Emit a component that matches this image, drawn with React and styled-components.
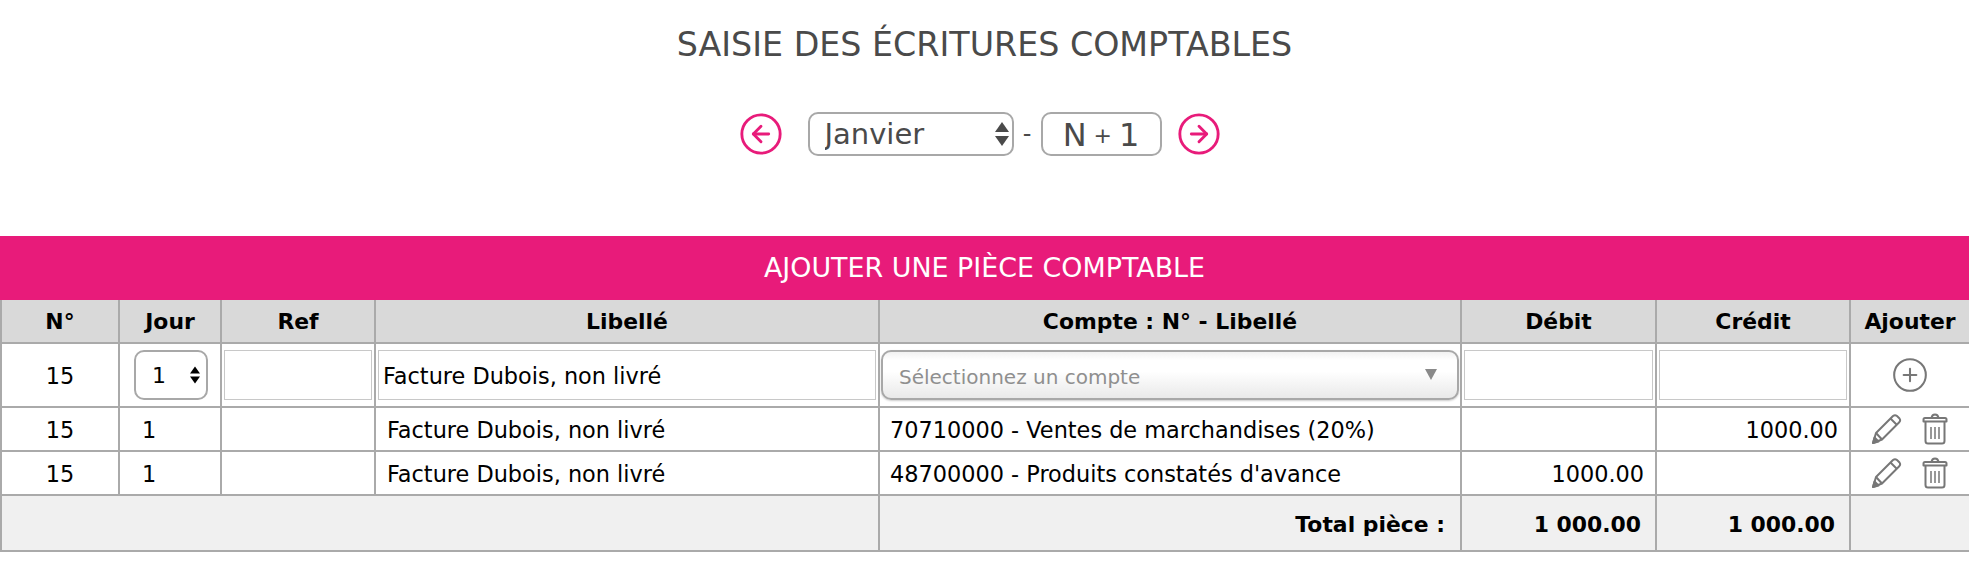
import React from 'react';
import styled, { createGlobalStyle } from 'styled-components';
import { CircleArrowLeft, CircleArrowRight, CirclePlus } from 'lucide-react';

const GlobalStyle = createGlobalStyle`
    html, body {
        margin: 0;
        padding: 0;
        background: #ffffff;
    }
    body {
        font-family: 'DejaVu Sans', Verdana, sans-serif;
        color: #000000;
    }
`;

const Page = styled.div`
    width: 1969px;
    min-height: 574px;
    overflow: hidden;
`;

const Title = styled.h1`
    margin: 0;
    padding-top: 25px;
    height: 89px;
    box-sizing: border-box;
    text-align: center;
    font-size: 33.3px;
    line-height: 40px;
    font-weight: 400;
    color: #4a4a4a;
`;

const PeriodBar = styled.div`
    height: 44px;
    margin-top: 23px;
    padding-right: 10px;
    display: flex;
    align-items: center;
    justify-content: center;
`;

const ArrowButton = styled.button`
    width: 40px;
    height: 40px;
    padding: 0;
    border: none;
    background: none;
    color: #e81b7a;
    display: flex;
    align-items: center;
    justify-content: center;
    margin: ${(p) => (p.$side === 'left' ? '0 27px 0 0' : '0 0 0 17px')};

    svg {
        flex-shrink: 0;
    }
`;

const SelectWrap = styled.div`
    position: relative;
    display: inline-block;
    width: ${(p) => p.$width}px;
    height: ${(p) => p.$height}px;
`;

const NativeSelect = styled.select`
    appearance: none;
    width: 100%;
    height: 100%;
    box-sizing: border-box;
    border: 2px solid #a8a8a8;
    border-radius: ${(p) => p.$radius}px;
    background: #ffffff;
    font-family: inherit;
    font-size: ${(p) => p.$size}px;
    color: ${(p) => p.$color};
    padding: 0 0 0 ${(p) => p.$pad}px;
    outline: none;
`;

const UpDown = styled.svg`
    position: absolute;
    top: 50%;
    right: ${(p) => p.$right}px;
    transform: translateY(-50%);
    pointer-events: none;
`;

const Dash = styled.span`
    width: 27px;
    text-align: center;
    font-size: 24px;
    color: #4a4a4a;
`;

const YearBox = styled.div`
    width: 121px;
    height: 44px;
    box-sizing: border-box;
    border: 2px solid #a8a8a8;
    border-radius: 10px;
    padding-top: 2px;
    display: flex;
    align-items: center;
    justify-content: center;
    gap: 7px;
    font-size: 32px;
    color: #4a4a4a;
`;

const Plus = styled.span`
    font-size: 22px;
`;

const Banner = styled.h2`
    margin: 80px 0 0;
    height: 64px;
    background: #e81b7a;
    color: #ffffff;
    font-size: 26.9px;
    font-weight: 400;
    line-height: 64px;
    text-align: center;
`;

const Sheet = styled.table`
    width: 1969px;
    table-layout: fixed;
    border-collapse: collapse;
    font-size: 22.4px;
`;

const HeadCell = styled.th`
    height: 42px;
    padding: 0;
    background: #d9d9d9;
    border: 2px solid #aaaaaa;
    border-top: none;
    font-size: 21.9px;
    font-weight: 700;
    text-align: center;
`;

const Cell = styled.td`
    height: ${(p) => p.$height || 44}px;
    padding: ${(p) => p.$pad || '0'};
    box-sizing: border-box;
    border: 2px solid #aaaaaa;
    text-align: ${(p) => p.$align || 'left'};
    vertical-align: middle;
    white-space: nowrap;
`;

const TotalCell = styled(Cell)`
    background: #f0f0f0;
    font-weight: 700;
    font-size: 21.9px;
`;

const TextInput = styled.input`
    display: block;
    width: 100%;
    height: 50px;
    box-sizing: border-box;
    border: 1px solid #c8c8c8;
    background: #ffffff;
    padding: 2px 4px 0;
    font-family: inherit;
    font-size: 22.4px;
    color: #000000;
    outline: none;
`;

const AccountPicker = styled.div`
    position: relative;
    height: 50px;
    box-sizing: border-box;
    border: 2px solid #a8a8a8;
    border-radius: 10px;
    background: linear-gradient(#f2f2f2, #ffffff 18%, #ffffff 42%, #e9e9e9);
    box-shadow: 0 1px 2px rgba(0, 0, 0, 0.2);
    display: flex;
    align-items: center;
    padding: 3px 0 0 16px;
    font-size: 20px;
    color: #8f8f8f;
`;

const PickerArrow = styled.span`
    position: absolute;
    right: 20px;
    top: 17px;
    width: 0;
    height: 0;
    border-left: 6px solid transparent;
    border-right: 6px solid transparent;
    border-top: 11px solid #8a8a8a;
`;

const ActionRow = styled.div`
    display: flex;
    align-items: center;
    padding-left: 19px;
    gap: 20px;
    color: #777777;
`;

const IconCenter = styled.div`
    display: flex;
    justify-content: center;
    color: #777777;
`;

const PencilIcon = () => (
    <svg width="32" height="32" viewBox="0 0 32 32" fill="none" stroke="currentColor" strokeWidth="2" strokeLinejoin="round">
        <path d="M3 30 L6 20 L23 3 Q25 1.5 27 3 L29.5 5.5 Q31 7.5 29 9.5 L12 26.5 Z" />
        <path d="M6 20 L12 26.5" />
        <path d="M20.5 5.5 L27 12" />
        <path d="M3 30 L4.5 24.5 L8.5 28.5 Z" fill="currentColor" />
    </svg>
);

const TrashIcon = () => (
    <svg width="26" height="32" viewBox="0 0 26 32" fill="none" stroke="currentColor" strokeWidth="2" strokeLinejoin="round">
        <path d="M1.5 6.5 Q1.5 5 3 5 H23 Q24.5 5 24.5 6.5 V8.5 H1.5 Z" />
        <path d="M9.5 5 Q10 1.5 13 1.5 Q16 1.5 16.5 5" />
        <path d="M3.5 8.5 V28 Q3.5 30.5 6 30.5 H20 Q22.5 30.5 22.5 28 V8.5" />
        <path d="M9 14 V26 M13 14 V26 M17 14 V26" strokeWidth="1.5" />
    </svg>
);

const UpDownArrows = ({ right, width, height, color }) => (
    <UpDown $right={right} width={width} height={height} viewBox="0 0 14 24" fill={color}>
        <path d="M7 0 L14 10 H0 Z" />
        <path d="M7 24 L0 14 H14 Z" />
    </UpDown>
);

const COLUMNS = [118, 102, 154, 504, 582, 195, 194, 120];

const rows = [
    { account: '70710000 - Ventes de marchandises (20%)', debit: '', credit: '1000.00' },
    { account: '48700000 - Produits constatés d\'avance', debit: '1000.00', credit: '' },
];

export default function App() {
    return (
        <Page>
            <GlobalStyle />
            <Title>SAISIE DES ÉCRITURES COMPTABLES</Title>
            <PeriodBar>
                <ArrowButton $side="left"><CircleArrowLeft size={46} strokeWidth={1.5} /></ArrowButton>
                <SelectWrap $width={206} $height={44}>
                    <NativeSelect $radius={10} $size={29} $pad={15} $color="#4a4a4a" defaultValue="Janvier">
                        <option>Janvier</option>
                    </NativeSelect>
                    <UpDownArrows right={5} width={14} height={24} color="#4a4a4a" />
                </SelectWrap>
                <Dash>-</Dash>
                <YearBox>N<Plus>+</Plus>1</YearBox>
                <ArrowButton $side="right"><CircleArrowRight size={46} strokeWidth={1.5} /></ArrowButton>
            </PeriodBar>
            <Banner>AJOUTER UNE PIÈCE COMPTABLE</Banner>
            <Sheet>
                <colgroup>
                    {COLUMNS.map((w, i) => <col key={i} style={{ width: w }} />)}
                </colgroup>
                <thead>
                    <tr>
                        <HeadCell>N°</HeadCell>
                        <HeadCell>Jour</HeadCell>
                        <HeadCell>Ref</HeadCell>
                        <HeadCell>Libellé</HeadCell>
                        <HeadCell>Compte : N° - Libellé</HeadCell>
                        <HeadCell>Débit</HeadCell>
                        <HeadCell>Crédit</HeadCell>
                        <HeadCell>Ajouter</HeadCell>
                    </tr>
                </thead>
                <tbody>
                    <tr>
                        <Cell $height={64} $align="center" $pad="2px 0 0">15</Cell>
                        <Cell $pad="0 12px 0 14px">
                            <SelectWrap $width={74} $height={50}>
                                <NativeSelect $radius={10} $size={22} $pad={16} $color="#000000" defaultValue="1">
                                    <option>1</option>
                                </NativeSelect>
                                <UpDownArrows right={8} width={10} height={24} color="#000000" />
                            </SelectWrap>
                        </Cell>
                        <Cell $pad="0 2px"><TextInput readOnly /></Cell>
                        <Cell $pad="0 2px"><TextInput readOnly defaultValue="Facture Dubois, non livré" /></Cell>
                        <Cell $pad="0 1px"><AccountPicker>Sélectionnez un compte<PickerArrow /></AccountPicker></Cell>
                        <Cell $pad="0 2px"><TextInput readOnly /></Cell>
                        <Cell $pad="0 2px"><TextInput readOnly /></Cell>
                        <Cell><IconCenter><CirclePlus size={38} strokeWidth={1.3} /></IconCenter></Cell>
                    </tr>
                    {rows.map((row) => (
                        <tr key={row.account}>
                            <Cell $align="center" $pad="2px 0 0">15</Cell>
                            <Cell $pad="2px 0 0 22px">1</Cell>
                            <Cell />
                            <Cell $pad="2px 0 0 11px">Facture Dubois, non livré</Cell>
                            <Cell $pad="2px 0 0 10px">{row.account}</Cell>
                            <Cell $align="right" $pad="2px 11px 0 0">{row.debit}</Cell>
                            <Cell $align="right" $pad="2px 11px 0 0">{row.credit}</Cell>
                            <Cell><ActionRow><PencilIcon /><TrashIcon /></ActionRow></Cell>
                        </tr>
                    ))}
                    <tr>
                        <TotalCell $height={56} colSpan={4} />
                        <TotalCell $align="right" $pad="2px 15px 0 0">Total pièce :</TotalCell>
                        <TotalCell $align="right" $pad="2px 14px 0 0">1 000.00</TotalCell>
                        <TotalCell $align="right" $pad="2px 14px 0 0">1 000.00</TotalCell>
                        <TotalCell />
                    </tr>
                </tbody>
            </Sheet>
        </Page>
    );
}
